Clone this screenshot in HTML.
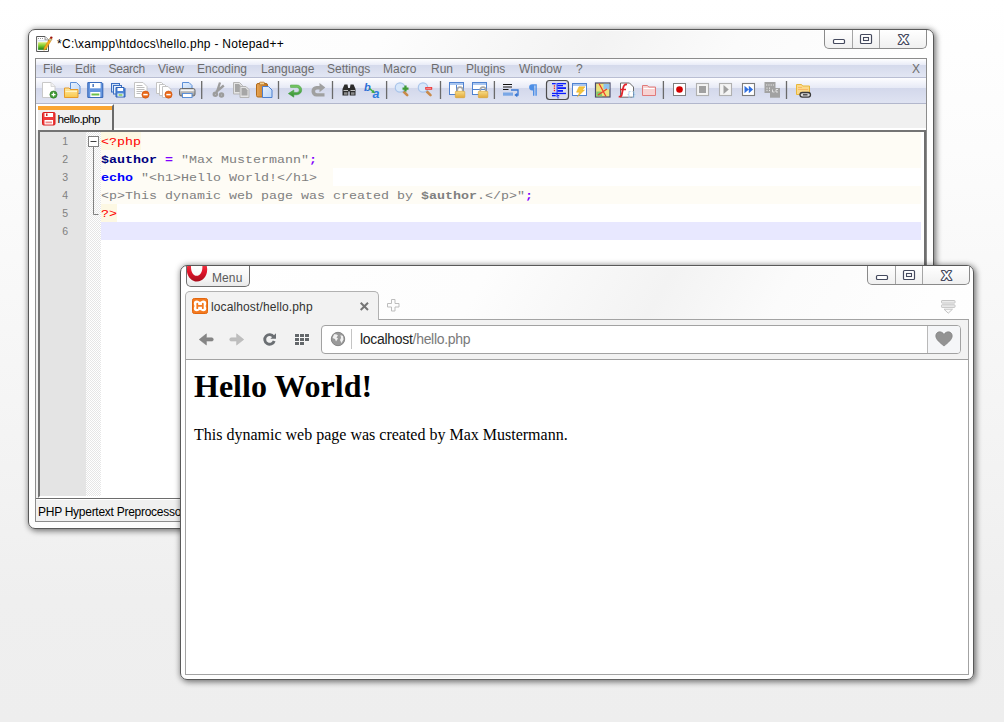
<!DOCTYPE html>
<html>
<head>
<meta charset="utf-8">
<title>hello.php</title>
<style>
*{box-sizing:border-box;margin:0;padding:0}
html,body{width:1004px;height:722px;overflow:hidden}
body{position:relative;background:linear-gradient(to bottom,#ffffff 0px,#fcfcfc 150px,#f5f5f5 400px,#efefef 600px,#eeeeee 722px);font-family:"Liberation Sans",sans-serif;font-size:12px;color:#000}
.abs{position:absolute}
/* ---------- generic aero window ---------- */
.win{position:absolute;border:1px solid #595959;border-radius:7px;background:linear-gradient(120deg,#ffffff 0%,#fdfdfd 30%,#f3f3f3 48%,#fbfbfb 60%,#fefefe 75%,#ffffff 100%);box-shadow:0 0 0 1px rgba(255,255,255,.7) inset,2px 2px 6px 0 rgba(0,0,0,.4),0 0 6px 0 rgba(0,0,0,.3)}
.client{position:absolute;border:1px solid #8c8c8c;background:#f0f0f0;overflow:hidden}
.caps{position:absolute;height:19px;border:1px solid #8a8a8a;border-top:none;border-radius:0 0 5px 5px;background:linear-gradient(#ffffff,#f6f6f6 60%,#f0f0f0);overflow:hidden}
.caps i{position:absolute;top:0;bottom:0;width:1px;background:#a5a5a5}
/* ---------- notepad++ ---------- */
#npp{left:28px;top:29px;width:906px;height:500px}
#npp .client{left:6px;top:28px;width:892px;height:464px}
#title{position:absolute;left:28px;top:7px;font-size:12px;line-height:14px;white-space:nowrap;color:#000;letter-spacing:.27px}
#menubar{position:absolute;left:0;top:0;right:0;height:19px;background:linear-gradient(#fefeff 0%,#e8ebf7 34%,#d5daec 36%,#e2e6f3 100%);border-bottom:1px solid #b9bed3;color:#6d6d6d;font-size:12px;line-height:14px}
#menubar span{position:absolute;top:3px;white-space:nowrap}
#toolbar{position:absolute;left:0;top:19px;right:0;height:26px;background:linear-gradient(#fdfdff 0%,#e7eaf6 39%,#d3d8eb 41%,#dfe3f2 100%);border-bottom:1px solid #b2b7cc}
#tabrow{position:absolute;left:0;top:45px;right:0;height:26px;background:#f0f0f0;border-bottom:2px solid #fff}
#tab1{position:absolute;left:0;top:0;width:78px;height:26px;background:#f0f0f0;border-right:2px solid #6a6a6a;border-top:2px solid #fff;border-left:2px solid #fff}
#tab1 u{position:absolute;left:0;top:0;right:0;height:4px;background:#faa634}
#tab1 span{position:absolute;left:19.500px;top:6px;font-size:11.800px;line-height:14px;letter-spacing:-.6px;white-space:nowrap}
#editor{position:absolute;left:2px;top:71px;width:888px;height:368px;border:2px solid #747474;border-right-color:#6f6f6f;border-bottom-color:#fff;background:#fff;overflow:hidden}
#lnum{position:absolute;left:0;top:0;width:46px;bottom:0;background:#e4e4e4}
#fold{position:absolute;left:46px;top:0;width:15px;bottom:0;background:#f2f2f2 conic-gradient(#fff 25%,#e6e6e6 0 50%,#fff 0 75%,#e6e6e6 0) 0 0/2px 2px}
.ln{position:absolute;left:0;width:28px;text-align:right;font-family:"Liberation Sans",sans-serif;font-size:10.500px;line-height:18px;color:#808080;height:18px;padding-top:0}
.cl{position:absolute;left:61px;right:3px;height:18px;font-family:"Liberation Mono",monospace;font-size:13.330px;line-height:18px;white-space:pre;color:#808080}
.cl u{position:absolute;left:0;top:0;height:18px;text-decoration:none}
.cl em{position:relative;top:.600px;display:inline-block;font-style:normal;transform:scaleY(.82);transform-origin:0 13px}
.cl b{font-weight:bold}
.bg{background:#fefcf5}
#status{position:absolute;left:0;top:439px;right:0;height:23px;background:#f0f0f0;border-top:1px solid #6d6d6d;font-size:12px;line-height:14px}
#status:before{content:"";position:absolute;left:0;right:0;top:0;height:1px;background:#fff}
#status span{position:absolute;left:2px;top:6px;white-space:nowrap;letter-spacing:-.27px}
/* ---------- opera ---------- */
#op{left:180px;top:265px;width:794px;height:415px}
#op .client{left:4px;top:53px;width:784px;height:356px;background:#fff;border-color:#a3a3a3}
#omenu{position:absolute;left:5px;top:0;width:64px;height:21px;border:1px solid #6e6e6e;border-top:none;border-radius:0 0 5px 5px;background:linear-gradient(#ffffff,#f3f3f3 70%,#e9e9e9);overflow:hidden}
#omenu span{position:absolute;left:25px;top:5px;font-size:12px;line-height:14px;color:#5a5a5a;letter-spacing:.1px}
#otab{position:absolute;left:4px;top:25px;width:194px;height:29px;border:1px solid #b1b1b1;border-bottom:none;border-radius:5px 5px 0 0;background:#f2f2f2;z-index:3}
#otab span{position:absolute;left:25px;top:8px;font-size:12px;line-height:14px;color:#333;white-space:nowrap;letter-spacing:.12px}
#otool{position:absolute;left:0;top:0;right:0;height:40px;background:#f2f2f2;border-bottom:1px solid #a3a3a3}
#addr{position:absolute;left:135px;top:5px;width:640px;height:29px;border:1px solid #a2a2a2;border-radius:4px;background:#fff;overflow:hidden}
#addr .u{position:absolute;left:38px;top:5px;font-size:14px;line-height:16px;white-space:nowrap;color:#222;letter-spacing:-.3px}
#addr .u em{font-style:normal;color:#7a7a7a}
#heart{position:absolute;right:0;top:0;bottom:0;width:33px;border-left:1px solid #b9b9b9;background:#f5f6f8}
#page{position:absolute;left:0;top:40px;right:0;bottom:0;background:#fff;font-family:"Liberation Serif",serif;color:#000}
#page h1{position:absolute;left:8px;top:8px;font-size:32px;line-height:37px;font-weight:bold;white-space:nowrap}
#page p{position:absolute;left:8px;top:66px;font-size:16px;line-height:18px;white-space:nowrap}
</style>
</head>
<body>

<!-- ================= Notepad++ ================= -->
<div class="win" id="npp">
  <svg class="abs" style="left:7px;top:6px" width="17" height="17" viewBox="0 0 17 17">
    <defs><linearGradient id="gNp" x1="0" y1="0" x2="0" y2="1"><stop offset="0" stop-color="#dcec7a"/><stop offset=".45" stop-color="#7fcb2f"/><stop offset="1" stop-color="#157a15"/></linearGradient></defs>
    <path d="M0.600 0.500h8.400l3.500 3.500v11.500h-11.900z" fill="#fff" stroke="#555"/>
    <path d="M9 0.500v3.500h3.500" fill="#eee" stroke="#777" stroke-width=".8"/>
    <rect x="2.100" y="6.200" width="9" height="7.600" fill="url(#gNp)"/>
    <path d="M2 2.500h5.500" stroke="#999" stroke-dasharray="1 1"/>
    <path d="M2.100 4.800h8.500" stroke="#c5d8ee"/>
    <path d="M14.100 1.800l2 1.200-6 10-2.300 1.200 .3-2.400z" fill="#f5a81c" stroke="#c9820f" stroke-width=".5"/>
    <path d="M13.600 2.600l2 1.200-.6 1-2-1.200z" fill="#a9c3dc"/>
    <circle cx="15.300" cy="1.600" r="1.200" fill="#9b1212"/>
  </svg>
  <div id="title">*C:\xampp\htdocs\hello.php - Notepad++</div>
  <div class="caps" style="left:795px;top:0;width:103px">
    <i style="left:27px"></i><i style="left:54px"></i>
    <svg class="abs" style="left:0;top:0" width="103" height="19" viewBox="0 1 103 19">
      <rect x="8.500" y="10.500" width="11" height="4" rx="1" fill="#fff" stroke="#454a5e" stroke-width="1.200"/>
      <rect x="35.500" y="5.500" width="11" height="9" rx="1" fill="#fff" stroke="#454a5e" stroke-width="1.200"/>
      <rect x="38.500" y="8.500" width="5" height="3" fill="#fff" stroke="#454a5e" stroke-width="1.100"/>
      <text x="78.600" y="14.700" font-family="Liberation Sans,sans-serif" font-size="12.500" font-weight="bold" text-anchor="middle" fill="#454a5e" stroke="#454a5e" stroke-width="2.200" stroke-linejoin="round" textLength="9.500" lengthAdjust="spacingAndGlyphs">X</text>
      <text x="78.600" y="14.700" font-family="Liberation Sans,sans-serif" font-size="12.500" font-weight="bold" text-anchor="middle" fill="#fff" textLength="9.500" lengthAdjust="spacingAndGlyphs">X</text>
    </svg>
  </div>

  <div class="client">
    <div id="menubar">
      <span style="left:7px">File</span>
      <span style="left:39px">Edit</span>
      <span style="left:72.500px;letter-spacing:-.25px">Search</span>
      <span style="left:122px">View</span>
      <span style="left:161px">Encoding</span>
      <span style="left:225px">Language</span>
      <span style="left:291px">Settings</span>
      <span style="left:347px">Macro</span>
      <span style="left:395px">Run</span>
      <span style="left:430px">Plugins</span>
      <span style="left:483px">Window</span>
      <span style="left:540px">?</span>
      <span style="left:876px">X</span>
    </div>
    <div id="toolbar"><svg class="abs" style="left:0;top:0" width="892" height="25" viewBox="36 78 892 25">
<defs>
<linearGradient id="gFold" x1="0" y1="0" x2="0" y2="1"><stop offset="0" stop-color="#fde9a6"/><stop offset="1" stop-color="#f9c84a"/></linearGradient>
<linearGradient id="gPage" x1="0" y1="0" x2="1" y2="1"><stop offset="0" stop-color="#e8f1fd"/><stop offset="1" stop-color="#bcd6f7"/></linearGradient>
<linearGradient id="gLock" x1="0" y1="0" x2="0" y2="1"><stop offset="0" stop-color="#f7dc86"/><stop offset="1" stop-color="#e2a93a"/></linearGradient>
<linearGradient id="gClip" x1="0" y1="0" x2="1" y2="0"><stop offset="0" stop-color="#e9a554"/><stop offset="1" stop-color="#b9701f"/></linearGradient>
<linearGradient id="gGreen" x1="0" y1="0" x2="0" y2="1"><stop offset="0" stop-color="#7fcb6a"/><stop offset="1" stop-color="#2f8f2f"/></linearGradient>
<linearGradient id="gPrn" x1="0" y1="0" x2="0" y2="1"><stop offset="0" stop-color="#e6e6e6"/><stop offset="1" stop-color="#8c8c8c"/></linearGradient>
</defs>
<!-- separators -->
<g stroke="#6a6a6a" stroke-width="1.3">
<path d="M201.700 81v18M278.500 81v18M332.500 81v18M386.600 81v18M440.500 81v18M494.400 81v18M663.400 81v18M786.500 81v18"/>
</g>
<!-- 1 new -->
<path d="M42.500 82.500h8.500l4 4v11h-12.500z" fill="#fff" stroke="#c9c9c9"/>
<path d="M51 82.500v4h4" fill="#f0f0f0" stroke="#d0d0d0" stroke-width=".8"/>
<circle cx="53.500" cy="94.600" r="3.600" fill="#3f9a35" stroke="#2b7a25" stroke-width=".6"/>
<path d="M51.500 94.600h4M53.500 92.600v4" stroke="#fff" stroke-width="1.300"/>
<!-- 2 open -->
<path d="M70.500 82.500h6l3.500 3.500v7.500h-9.500z" fill="url(#gPage)" stroke="#5b8fd8"/>
<path d="M64.500 97.500v-9.500h4.500l1.500 1.500h7.500v8z" fill="url(#gFold)" stroke="#e59a2b"/>
<path d="M65.500 91.500h11.500" stroke="#fff3c4" stroke-width="1"/>
<!-- 3 save -->
<path d="M87.800 82.600h14l1 1v13.800h-15z" fill="#6596df" stroke="#2f62b5"/>
<rect x="90" y="83" width="10.600" height="5.300" fill="#fff"/>
<rect x="92.500" y="84" width="1.300" height="3" fill="#2f62b5"/>
<rect x="90.300" y="92" width="10" height="5" fill="#fff"/>
<rect x="91.500" y="93.500" width="7.800" height="2" fill="#6cc04a"/>
<!-- 4 save all -->
<rect x="111.500" y="83.500" width="8" height="8.500" fill="#cfe0f7" stroke="#3b6fc2"/>
<rect x="113.500" y="85.500" width="8" height="8.500" fill="#e6effb" stroke="#3b6fc2"/>
<path d="M116 87.500h8l1 1v8.500h-9z" fill="#4f86d6" stroke="#2f62b5"/>
<rect x="117.500" y="88" width="5.500" height="3" fill="#fff"/>
<rect x="117.500" y="93.500" width="6" height="3" fill="#fff"/>
<rect x="118.500" y="94.300" width="4" height="1.400" fill="#6cc04a"/>
<!-- 5 close -->
<path d="M134.500 82.500h8.500l4 4v11h-12.500z" fill="#fff" stroke="#c4c4c4"/>
<path d="M136.500 85.500h6M136.500 87.500h8M136.500 89.500h8M136.500 91.500h6M136.500 93.500h4" stroke="#b5b5b5" stroke-width=".9"/>
<circle cx="145.500" cy="94.600" r="3.600" fill="#ea6a1a" stroke="#c94f0c" stroke-width=".6"/>
<path d="M143.300 94.600h4.400" stroke="#fff" stroke-width="1.500"/>
<!-- 6 close all -->
<path d="M156.500 82.500h5l2 2v9h-7z" fill="#fff" stroke="#c4c4c4"/>
<path d="M159.500 84.500h5l2 2v9h-7z" fill="#fff" stroke="#c4c4c4"/>
<path d="M162.500 86.500h5.500l3 3v8h-8.500z" fill="#fff" stroke="#c4c4c4"/>
<circle cx="168.500" cy="94.600" r="3.600" fill="#ea6a1a" stroke="#c94f0c" stroke-width=".6"/>
<path d="M166.300 94.600h4.400" stroke="#fff" stroke-width="1.500"/>
<!-- 7 print -->
<path d="M182.500 89v-6.500h6.500l3 3v3.500z" fill="url(#gPage)" stroke="#5b8fd8"/>
<rect x="179.500" y="88.500" width="15.500" height="7.500" rx="1.800" fill="url(#gPrn)" stroke="#6b6b6b"/>
<rect x="182.500" y="93.500" width="9.500" height="4" fill="#fff" stroke="#5b8fd8"/>
<path d="M181 90.500h12.500" stroke="#fff" stroke-width="1" opacity=".8"/>
<!-- 8 cut (disabled) -->
<g fill="none" stroke="#9c9c9c" stroke-width="2.300">
<path d="M220 82.500l-3.300 10M223.800 85.500l-7.800 6.500"/>
<circle cx="215.300" cy="94.300" r="1.600"/><circle cx="221.500" cy="95" r="1.600"/>
</g>
<!-- 9 copy (disabled) -->
<path d="M233.500 82.500h6l3 3v8.500h-9z" fill="#e4e4e4" stroke="#b4b4b4"/>
<path d="M235 84h4l2 2.200v5.800h-6z" fill="#a6a6a6"/>
<path d="M240 86.500h6l3 3v8h-9z" fill="#e4e4e4" stroke="#b4b4b4"/>
<path d="M241.500 88h4l2 2.200v5.300h-6z" fill="#a6a6a6"/>
<!-- 10 paste -->
<rect x="256.500" y="83.500" width="11" height="13.500" rx="1.500" fill="url(#gClip)" stroke="#b06a1b"/>
<rect x="259.500" y="82.200" width="5" height="2.600" rx=".8" fill="#f3cf8e" stroke="#b06a1b" stroke-width=".7"/>
<path d="M262.500 86.500h6l3.500 3.500v7.500h-9.500z" fill="url(#gPage)" stroke="#4b7fd0"/>
<!-- 11 undo -->
<path d="M290.500 85h6.300a4.900 4.900 0 0 1 0 9.800h-3v2.400l-5.500-3.600 5.500-3.600v2.400h3a2.500 2.500 0 0 0 0-5h-6.300z" fill="url(#gGreen)" stroke="#3a9a3a" stroke-width=".5"/>
<!-- 12 redo (disabled) -->
<path d="M325.300 87.500l-5.800-4.500v3h-3a5 5 0 0 0-5 5.200a5 5 0 0 0 5 5.300h8v-3.300h-7.500a1.800 1.800 0 0 1 0-3.800h2.500v2.800z" fill="#a0a0a0"/>
<!-- 13 find (binoculars) -->
<g fill="#2b2b2b">
<path d="M342.500 95.500v-6.500l2-4.500h3l.8 4.500v6.500z"/>
<path d="M349.700 95.500v-6.500l.8-4.500h3l2 4.500v6.500z"/>
<rect x="347.500" y="88" width="3" height="3.500"/>
</g>
<path d="M343.500 90.500h4.500M350.500 90.500h4.500" stroke="#bdbdbd" stroke-width="1"/>
<path d="M344 92.300h3.500v2.400h-3.500zM351 92.300h3.500v2.400h-3.500z" fill="#8b8b8b"/>
<!-- 14 replace -->
<text x="364" y="90.500" font-family="Liberation Sans,sans-serif" font-style="italic" font-weight="bold" font-size="11" fill="#2b6fd6">b</text>
<text x="372.500" y="98" font-family="Liberation Sans,sans-serif" font-style="italic" font-weight="bold" font-size="12.500" fill="#2b7be0">a</text>
<path d="M369.500 88.500l4 3.500" stroke="#3fae3f" stroke-width="1.600"/>
<path d="M374.800 93.200l-3.600-.6 2.700-2.700z" fill="#3fae3f"/>
<!-- 15 zoom in -->
<path d="M403.500 91.500l3.700 3.700" stroke="#c98a4a" stroke-width="2.600" stroke-linecap="round"/>
<circle cx="400" cy="87.500" r="4.700" fill="#d7e7fa" stroke="#a9c4ea" stroke-width="1.200"/>
<path d="M402.500 88.600h6M405.500 85.600v6" stroke="#3f9a35" stroke-width="2.200"/>
<!-- 16 zoom out -->
<path d="M426.800 91.500l3.700 3.700" stroke="#c98a4a" stroke-width="2.600" stroke-linecap="round"/>
<circle cx="423" cy="87.500" r="4.700" fill="#d7e7fa" stroke="#a9c4ea" stroke-width="1.200"/>
<rect x="425.200" y="87" width="7" height="2.700" rx=".5" fill="#ee3535"/>
<path d="M426.200 88.300h5" stroke="#ffc9c9" stroke-width=".7"/>
<!-- 17 sync v -->
<rect x="449.500" y="82.500" width="14" height="12" fill="#fff" stroke="#4f82d0"/>
<rect x="450" y="83" width="13" height="2" fill="#a9c6f0"/>
<path d="M456.500 85v9.500" stroke="#4f82d0"/>
<path d="M457.300 91.500v-1.700a2.700 2.700 0 0 1 5.400 0v1.700" fill="none" stroke="#a8a8a8" stroke-width="1.700"/>
<rect x="455.300" y="91.300" width="9.500" height="6.400" rx=".7" fill="url(#gLock)" stroke="#d9a02f" stroke-width=".6"/>
<!-- 18 sync h -->
<rect x="472.500" y="82.500" width="14" height="12" fill="#fff" stroke="#4f82d0"/>
<rect x="473" y="83" width="13" height="2" fill="#a9c6f0"/>
<path d="M473 89.500h13" stroke="#4f82d0"/>
<path d="M480.300 91.500v-1.700a2.700 2.700 0 0 1 5.400 0v1.700" fill="none" stroke="#a8a8a8" stroke-width="1.700"/>
<rect x="478.300" y="91.300" width="9.500" height="6.400" rx=".7" fill="url(#gLock)" stroke="#d9a02f" stroke-width=".6"/>
<!-- 19 wrap -->
<path d="M503 84.500h9M503 87h9M503 89.500h5.500" stroke="#111" stroke-width="1.100"/>
<rect x="503" y="92.500" width="10" height="3.200" fill="#7aa7e6"/>
<path d="M511 90h7v5h-2.500" fill="none" stroke="#3a78d4" stroke-width="1.300"/>
<path d="M514.300 95l3-2.300v4.600z" fill="#3a78d4"/>
<!-- 20 pilcrow -->
<path d="M536.800 84.200h-4.600a3.100 3.100 0 0 0 0 6.200h.8v5.400h1.400v-10.200h1v10.200h1.400z" fill="#4d8fe6"/>
<!-- 21 indent guide (pressed) -->
<rect x="546.500" y="80.500" width="22" height="19" rx="3" fill="#d9dce8" stroke="#4c4c4c" stroke-width="1.200"/>
<g fill="#0a1cff">
<rect x="552" y="83" width="3.700" height="1.300"/><rect x="557.400" y="83" width="8.600" height="1.300"/>
<rect x="557.400" y="85" width="5.600" height="1.300"/>
<rect x="557.400" y="87.200" width="8.600" height="1.800"/>
<rect x="557.400" y="90" width="5.600" height="1.800"/>
<rect x="552" y="92.800" width="14" height="1.300"/>
<rect x="552" y="95" width="3.700" height="1.300"/><rect x="557.400" y="95" width="1.800" height="1.300"/>
<rect x="557.400" y="97.200" width="1.200" height="1.200"/>
<rect x="556.600" y="83" width=".9" height="14"/>
</g>
<g fill="#f01818"><rect x="553.800" y="85.300" width="1.300" height="1.300"/><rect x="553.800" y="87.600" width="1.300" height="1.300"/><rect x="553.800" y="89.900" width="1.300" height="1.300"/></g>
<!-- 22 user lang -->
<rect x="572.500" y="83.500" width="14" height="12" fill="#fff" stroke="#4f82d0"/>
<rect x="573" y="84" width="13" height="2" fill="#a9c6f0"/>
<path d="M579 86.800h6l-2.800 3.300h2.300l-7 6.600 2.200-4.500h-3.200z" fill="#f5c53a" stroke="#e0a825" stroke-width=".5"/>
<!-- 23 doc map -->
<rect x="595.500" y="83" width="14.500" height="14" fill="#ece27a" stroke="#4a4a6a" stroke-width="1.200"/>
<rect x="603.500" y="83.800" width="6" height="5.500" fill="#8fc3ee"/>
<path d="M596.300 91.500h5l1 5h-6z" fill="#86c86a"/>
<path d="M599 83.500l7 13M598 95l9-6" stroke="#ee3b2b" stroke-width="1.200"/>
<!-- 24 function list -->
<path d="M620.500 83h9l4 4v10.200h-13z" fill="#fff" stroke="#6a6a6a"/>
<text x="626.500" y="95.500" font-family="Liberation Mono,monospace" font-size="8" fill="#9fc4e8">{}</text>
<path d="M627 84.500c-2.500-.5-3.500 1.500-4 4l-1.300 6.500c-.4 1.500-1.300 2-3 1.500" fill="none" stroke="#e3242b" stroke-width="1.800"/>
<path d="M620 89.500h6" stroke="#e3242b" stroke-width="1.500"/>
<!-- 25 folder (pink) -->
<path d="M642.500 95.500v-10h5l1.200 1.500h6.800v8.500z" fill="#f7d3d3" stroke="#e07a7a"/>
<path d="M643.500 88.500h11" stroke="#fff" stroke-width="1"/>
<!-- 26 record -->
<rect x="673.500" y="83.500" width="12" height="12" fill="#fff" stroke="#808080" stroke-width="1"/>
<circle cx="679.500" cy="89.500" r="3.300" fill="#d30000"/>
<!-- 27 stop -->
<rect x="696.500" y="83.500" width="12" height="12" fill="#f4f4f4" stroke="#b0b0b0" stroke-width="1.100"/>
<rect x="699" y="86" width="7" height="7" fill="#a0a0a0"/>
<!-- 28 play -->
<rect x="719.500" y="83.500" width="12" height="12" fill="#f4f4f4" stroke="#b0b0b0" stroke-width="1.100"/>
<path d="M723.500 85v9l5.300-4.500z" fill="#a0a0a0"/>
<!-- 29 play multi -->
<rect x="742.500" y="83.500" width="12" height="12" fill="#fff" stroke="#7c7c7c" stroke-width="1.100"/>
<path d="M744.500 85.700v7.600l4.300-3.800zM748.800 85.700v7.600l4.300-3.800z" fill="#2f6fe0"/>
<!-- 30 save macro (disabled) -->
<rect x="764.500" y="82" width="11" height="11" fill="#a2a2a2"/>
<rect x="770" y="88" width="10" height="9.700" fill="#a2a2a2"/>
<path d="M766 85h8M767 87.500v4.500M769.500 87.500v4.500" stroke="#e8e8e8" stroke-width="1" stroke-dasharray="1.300 1"/>
<path d="M772.500 89.500v2.500h2M778 89.500h-2v2.500h2" fill="none" stroke="#e8e8e8" stroke-width=".9"/>
<!-- 31 folder link -->
<path d="M796.500 94.500v-10h5l1.200 1.500h6.800v8.500z" fill="#fbd98a" stroke="#e8b73a"/>
<path d="M798 87.500h4M798 89.500h10" stroke="#f9b868" stroke-width="1.200"/>
<rect x="800" y="92.500" width="10.500" height="4.600" rx="2.300" fill="#d9d9d9" stroke="#3a3a3a" stroke-width="1.300"/>
<path d="M803 94.800h4.500" stroke="#3a3a3a" stroke-width="1.300"/>
</svg>
</div>
    <div id="tabrow">
      <div id="tab1"><u></u>
        <svg class="abs" style="left:4px;top:6px" width="14" height="14" viewBox="0 0 14 14">
          <rect x=".500" y=".500" width="12.500" height="12.500" rx="1.200" fill="#ee3a3a" stroke="#d81e1e"/>
          <rect x="2.500" y="1" width="8.500" height="4" fill="#fff"/>
          <rect x="4" y="1.500" width="1.500" height="2.500" fill="#d81e1e"/>
          <rect x="2.500" y="8" width="8.500" height="4.500" fill="#fff"/>
          <rect x="3.500" y="9.500" width="6.500" height="1.800" fill="#f08a8a"/>
        </svg>
        <span>hello.php</span></div>
    </div>
    <div id="editor">
      <div id="lnum"></div>
      <div id="fold"></div>
      <svg class="abs" style="left:46px;top:0" width="15" height="110" viewBox="0 0 15 110">
        <path d="M7.500 15v67.500h5" fill="none" stroke="#808080"/>
        <rect x="2.500" y="4.500" width="10" height="10" fill="#fff" stroke="#808080"/>
        <path d="M4.500 9.500h6" stroke="#404040"/>
      </svg>
      <div class="ln" style="top:0px">1</div>
      <div class="ln" style="top:18px">2</div>
      <div class="ln" style="top:36px">3</div>
      <div class="ln" style="top:54px">4</div>
      <div class="ln" style="top:72px">5</div>
      <div class="ln" style="top:90px">6</div>
      <div class="cl bg" style="top:0px"><u style="width:40px;background:#fdf8e3"></u><em><span style="color:#f00">&lt;?php</span></em></div>
      <div class="cl bg" style="top:18px"><em><b style="color:#000080">$author</b> <b style="color:#8000ff">=</b> "Max Mustermann"<b style="color:#8000ff">;</b></em></div>
      <div class="cl" style="top:36px"><u class="bg" style="width:232px"></u><em><b style="color:#00f">echo</b> "&lt;h1&gt;Hello World!&lt;/h1&gt;</em></div>
      <div class="cl bg" style="top:54px"><em>&lt;p&gt;This dynamic web page was created by <b>$author</b>.&lt;/p&gt;"<b style="color:#8000ff">;</b></em></div>
      <div class="cl" style="top:72px"><u style="width:16px;background:#fdf8e3"></u><em><span style="color:#f00">?&gt;</span></em></div>
      <div class="cl" style="top:90px;background:#e8e8ff"></div>
    </div>
    <div id="status"><span>PHP Hypertext Preprocessor file</span></div>
  </div>
</div>

<!-- ================= Opera ================= -->
<div class="win" id="op">
  <div id="omenu">
    <svg class="abs" style="left:-1px;top:0" width="24" height="22" viewBox="186 266 24 22">
      <defs><linearGradient id="gO" x1="0" y1="0" x2="0" y2="1"><stop offset="0" stop-color="#ff5a5a"/><stop offset=".6" stop-color="#e0142a"/><stop offset="1" stop-color="#a80d1c"/></linearGradient></defs>
      <path fill-rule="evenodd" fill="url(#gO)" d="M197 257.500c5.700 0 10.200 5.300 10.200 12s-4.500 12-10.200 12-10.200-5.300-10.200-12 4.500-12 10.200-12zM196.700 258c-3.100 0-5.700 3.600-5.700 8.900s2.600 8.900 5.700 8.900 5.700-3.600 5.700-8.900-2.600-8.900-5.700-8.900z"/>
    </svg>
    <span>Menu</span></div>
  <div class="caps" style="left:686px;top:0;width:103px">
    <i style="left:27px"></i><i style="left:54px"></i>
    <svg class="abs" style="left:0;top:0" width="103" height="19" viewBox="0 1 103 19">
      <rect x="8.500" y="10.500" width="11" height="4" rx="1" fill="#fff" stroke="#454a5e" stroke-width="1.200"/>
      <rect x="35.500" y="5.500" width="11" height="9" rx="1" fill="#fff" stroke="#454a5e" stroke-width="1.200"/>
      <rect x="38.500" y="8.500" width="5" height="3" fill="#fff" stroke="#454a5e" stroke-width="1.100"/>
      <text x="78.600" y="14.700" font-family="Liberation Sans,sans-serif" font-size="12.500" font-weight="bold" text-anchor="middle" fill="#454a5e" stroke="#454a5e" stroke-width="2.200" stroke-linejoin="round" textLength="9.500" lengthAdjust="spacingAndGlyphs">X</text>
      <text x="78.600" y="14.700" font-family="Liberation Sans,sans-serif" font-size="12.500" font-weight="bold" text-anchor="middle" fill="#fff" textLength="9.500" lengthAdjust="spacingAndGlyphs">X</text>
    </svg>
  </div>
  <div id="otab">
    <svg class="abs" style="left:6px;top:6px" width="16" height="16" viewBox="0 0 16 16">
      <rect x=".500" y=".500" width="15" height="15" rx="1.800" fill="#f47a20" stroke="#e2670f"/>
      <g fill="#fff"><circle cx="4.700" cy="5.400" r="2.800"/><circle cx="11.400" cy="5.400" r="2.800"/><circle cx="4.700" cy="10.500" r="2.800"/><circle cx="11.400" cy="10.500" r="2.800"/><rect x="2.500" y="5.400" width="11.100" height="5.100"/><rect x="4.700" y="3.700" width="6.700" height="8.500"/></g>
      <path d="M5.300 5.700v4.500M10.800 5.700v4.500M5.300 7.950h5.500" fill="none" stroke="#f47a20" stroke-width="1.800" stroke-linecap="round"/>
    </svg>
    <span>localhost/hello.php</span>
    <svg class="abs" style="left:173px;top:9px" width="11" height="11" viewBox="0 0 11 11"><path d="M1.700 1.700l7.300 7.300M9 1.700l-7.300 7.300" stroke="#757575" stroke-width="2"/></svg>
  </div>
  <svg class="abs" style="left:205px;top:32px" width="16" height="16" viewBox="0 0 16 16"><path d="M5.500 1.500h3.500v4h4v3.500h-4v4h-3.500v-4h-4v-3.500h4z" fill="#fdfdfd" stroke="#bdbdbd" stroke-linejoin="round"/></svg>
  <svg class="abs" style="left:759px;top:33px" width="18" height="16" viewBox="0 0 18 16"><g fill="#ececec" stroke="#c4c4c4" stroke-width="1"><rect x="1.500" y="1.500" width="13.500" height="2.600" rx=".6"/><rect x="1.500" y="5.800" width="13.500" height="2.600" rx=".6"/><path d="M4 10.200h8.500l-4.250 4z" fill="#fafafa" stroke-linejoin="round"/></g></svg>
  <div class="client">
    <div id="otool">
      <svg class="abs" style="left:0;top:0" width="134" height="40" viewBox="186 320 134 40">
        <path d="M199.200 339.500l7.200-5.700v4h5.300a1.650 1.650 0 0 1 0 3.300h-5.300v4z" fill="#868686" stroke="#7a7a7a" stroke-width=".5"/>
        <path d="M243.800 339.500l-7.200-5.700v4h-5.300a1.650 1.650 0 0 0 0 3.300h5.300v4z" fill="#bebebe" stroke="#b4b4b4" stroke-width=".5"/>
        <path d="M273.600 336.700a4.850 4.850 0 1 0 .6 4.300" fill="none" stroke="#6b6f73" stroke-width="2.900"/>
        <path d="M276 333.200v5.600h-5.600z" fill="#6b6f73"/>
        <g fill="#63676a" stroke="#fafafa" stroke-width=".6" paint-order="stroke">
          <rect x="295" y="334" width="4" height="3"/><rect x="300" y="334" width="4" height="3"/><rect x="305" y="334" width="4" height="3"/>
          <rect x="295" y="338" width="4" height="3"/><rect x="300" y="338" width="4" height="3"/><rect x="305" y="338" width="4" height="3"/>
          <rect x="295" y="342" width="4" height="3"/><rect x="300" y="342" width="4" height="3"/>
        </g>
      </svg>
      <div id="addr">
        <svg class="abs" style="left:7px;top:4px" width="18" height="18" viewBox="0 0 18 18">
          <circle cx="9" cy="9" r="6.700" fill="#9a9a9a" stroke="#858585" stroke-width="1"/>
          <path d="M5 4.500c1.500-.5 3 0 4 1l-1.500 2 1.500 1-2 3-1-2.500-2.500-1zM11.500 5l2.500 1 .5 3.500-2 3.500-1.500-3 1-2z" fill="#f1f1f1"/>
        </svg>
        <div class="abs" style="left:29px;top:3px;width:1px;height:20px;background:#c4c4c4"></div>
        <div class="u">localhost<em>/hello.php</em></div>
        <div id="heart">
          <svg class="abs" style="left:7px;top:5px" width="18" height="16" viewBox="0 0 18 16"><path d="M9 15C4 11 .8 8.200 .8 4.800.8 2.500 2.500 .8 4.700 .8 6.500 .8 8 1.800 9 3.400 10 1.800 11.500 .8 13.300 .8c2.200 0 3.900 1.700 3.900 4C17.200 8.200 14 11 9 15z" fill="#939393" stroke="#808080" stroke-width=".7"/></svg>
        </div>
      </div>
    </div>
    <div id="page">
      <h1>Hello World!</h1>
      <p>This dynamic web page was created by Max Mustermann.</p>
    </div>
  </div>
</div>

</body>
</html>
